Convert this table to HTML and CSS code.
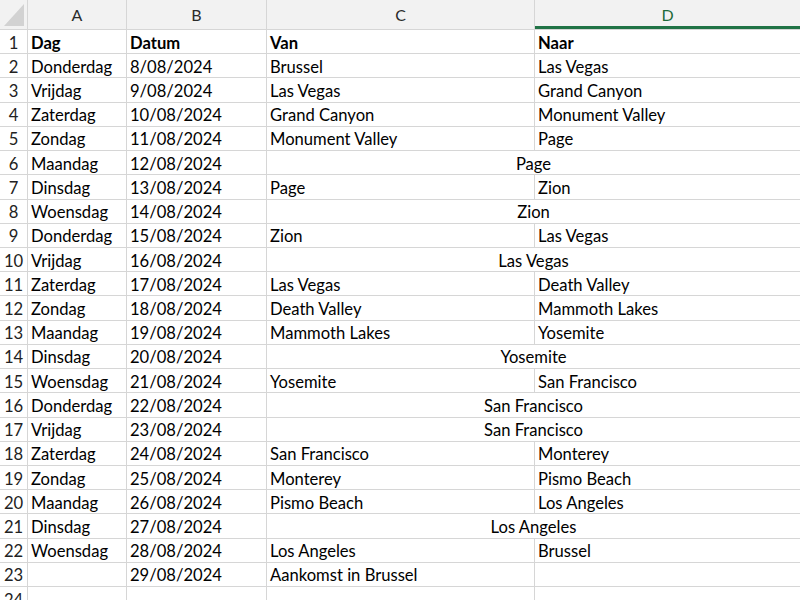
FILE: index.html
```html
<!DOCTYPE html>
<html lang="nl">
<head>
<meta charset="utf-8">
<title>Reisschema</title>
<link rel="stylesheet" href="styles.css">
</head>
<body>
<div class="sheet">
  <div class="corner"><span class="tri"></span></div>
  <div class="colhead">A</div>
  <div class="colhead">B</div>
  <div class="colhead">C</div>
  <div class="colhead active">D</div>

  <div class="rn">1</div><div class="c b">Dag</div><div class="c b">Datum</div><div class="c b">Van</div><div class="c b">Naar</div>
  <div class="rn">2</div><div class="c">Donderdag</div><div class="c">8/08/2024</div><div class="c">Brussel</div><div class="c">Las Vegas</div>
  <div class="rn">3</div><div class="c">Vrijdag</div><div class="c">9/08/2024</div><div class="c">Las Vegas</div><div class="c">Grand Canyon</div>
  <div class="rn">4</div><div class="c">Zaterdag</div><div class="c">10/08/2024</div><div class="c">Grand Canyon</div><div class="c">Monument Valley</div>
  <div class="rn">5</div><div class="c">Zondag</div><div class="c">11/08/2024</div><div class="c">Monument Valley</div><div class="c">Page</div>
  <div class="rn">6</div><div class="c">Maandag</div><div class="c">12/08/2024</div><div class="c m">Page</div>
  <div class="rn">7</div><div class="c">Dinsdag</div><div class="c">13/08/2024</div><div class="c">Page</div><div class="c">Zion</div>
  <div class="rn">8</div><div class="c">Woensdag</div><div class="c">14/08/2024</div><div class="c m">Zion</div>
  <div class="rn">9</div><div class="c">Donderdag</div><div class="c">15/08/2024</div><div class="c">Zion</div><div class="c">Las Vegas</div>
  <div class="rn">10</div><div class="c">Vrijdag</div><div class="c">16/08/2024</div><div class="c m">Las Vegas</div>
  <div class="rn">11</div><div class="c">Zaterdag</div><div class="c">17/08/2024</div><div class="c">Las Vegas</div><div class="c">Death Valley</div>
  <div class="rn">12</div><div class="c">Zondag</div><div class="c">18/08/2024</div><div class="c">Death Valley</div><div class="c">Mammoth Lakes</div>
  <div class="rn">13</div><div class="c">Maandag</div><div class="c">19/08/2024</div><div class="c">Mammoth Lakes</div><div class="c">Yosemite</div>
  <div class="rn">14</div><div class="c">Dinsdag</div><div class="c">20/08/2024</div><div class="c m">Yosemite</div>
  <div class="rn">15</div><div class="c">Woensdag</div><div class="c">21/08/2024</div><div class="c">Yosemite</div><div class="c">San Francisco</div>
  <div class="rn">16</div><div class="c">Donderdag</div><div class="c">22/08/2024</div><div class="c m">San Francisco</div>
  <div class="rn">17</div><div class="c">Vrijdag</div><div class="c">23/08/2024</div><div class="c m">San Francisco</div>
  <div class="rn">18</div><div class="c">Zaterdag</div><div class="c">24/08/2024</div><div class="c">San Francisco</div><div class="c">Monterey</div>
  <div class="rn">19</div><div class="c">Zondag</div><div class="c">25/08/2024</div><div class="c">Monterey</div><div class="c">Pismo Beach</div>
  <div class="rn">20</div><div class="c">Maandag</div><div class="c">26/08/2024</div><div class="c">Pismo Beach</div><div class="c">Los Angeles</div>
  <div class="rn">21</div><div class="c">Dinsdag</div><div class="c">27/08/2024</div><div class="c m">Los Angeles</div>
  <div class="rn">22</div><div class="c">Woensdag</div><div class="c">28/08/2024</div><div class="c">Los Angeles</div><div class="c">Brussel</div>
  <div class="rn">23</div><div class="c"></div><div class="c">29/08/2024</div><div class="c">Aankomst in Brussel</div><div class="c"></div>
  <div class="rn">24</div><div class="c"></div><div class="c"></div><div class="c"></div><div class="c"></div>
</div>
</body>
</html>
```
FILE: styles.css
```css
html, body {
  margin: 0;
  padding: 0;
  width: 800px;
  height: 600px;
  overflow: hidden;
  background: #ffffff;
}

.sheet {
  display: grid;
  grid-template-columns: 27px 98px 139px 267px 265px;
  grid-template-rows: 29px;
  grid-auto-rows: 23.23px;
  gap: 1px;
  background: #d6d6d6;
  font-family: "Lato", "Open Sans", sans-serif;
  font-size: 16.6px;
  color: #000;
}

.corner {
  background: #f2f2f2;
  position: relative;
}

.tri {
  position: absolute;
  right: 3px;
  bottom: 3px;
  width: 20px;
  height: 22px;
  background: #d2d2d2;
  clip-path: polygon(100% 0, 100% 100%, 0 100%);
}

.colhead {
  background: #f2f2f2;
  display: flex;
  align-items: center;
  justify-content: center;
  color: #2b2b2b;
  font-size: 16px;
}

.colhead.active {
  color: #1d6b3a;
  box-shadow: inset 0 -3px 0 #217346;
}

.rn {
  background: #ffffff;
  display: flex;
  align-items: center;
  justify-content: center;
  padding-top: 2px;
  color: #222;
  font-size: 16.6px;
}

.c {
  background: #ffffff;
  display: flex;
  align-items: center;
  padding-left: 3px;
  padding-top: 2px;
  white-space: nowrap;
  overflow: hidden;
}

.c.b {
  font-weight: 700;
}

.c.m {
  grid-column: span 2;
  justify-content: center;
  padding-left: 0;
}
```
